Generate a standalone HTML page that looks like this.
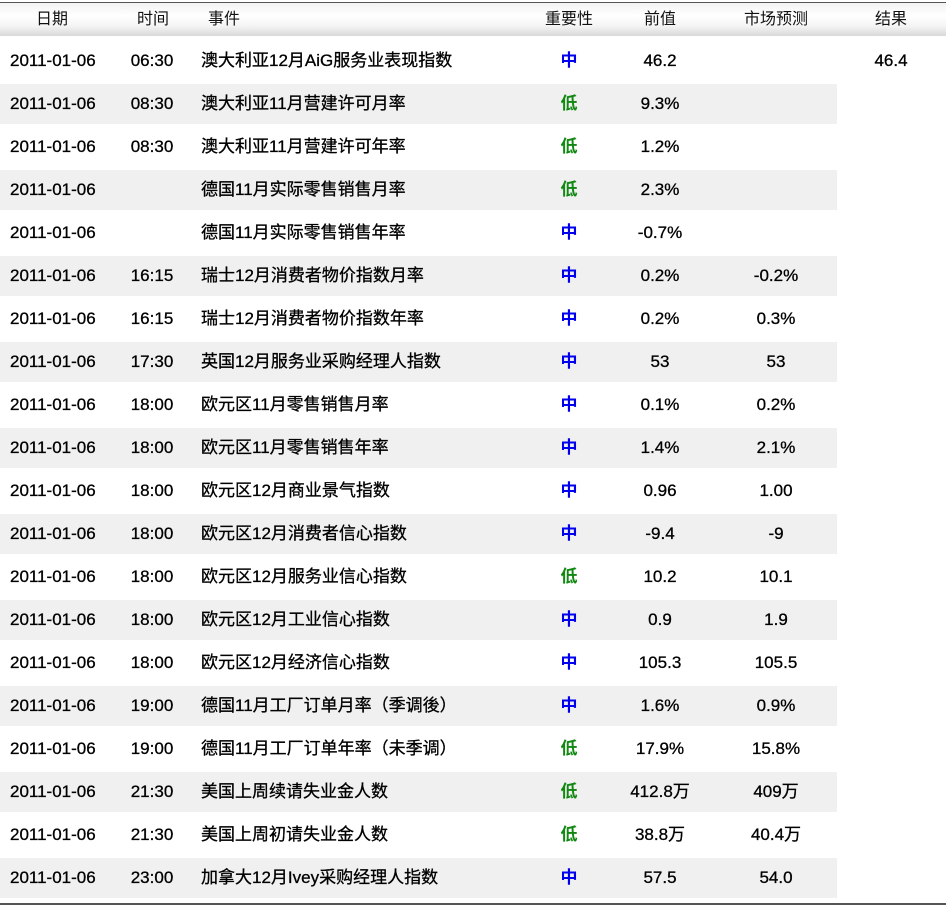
<!DOCTYPE html>
<html><head><meta charset="utf-8"><style>
body{margin:0;width:946px;height:912px;background:#fff;position:relative;overflow:hidden;font-family:"Liberation Sans","Noto Sans CJK SC",sans-serif;font-size:17px;color:#000}
.hd{position:absolute;left:0;top:2px;width:946px;height:33px;border-top:1px solid #555;background:linear-gradient(#f2f2f2,#fff 40%,#f4f4f4 70%,#d8d8d8);}
.hd span{position:absolute;top:0;line-height:33px;font-size:16px;color:#111}
.r{position:absolute;left:0;width:946px;height:43px}
.r.g::before{content:"";position:absolute;left:0;top:3px;width:837px;height:40px;background:#f0f0f0}
.r span{position:absolute;top:1px;line-height:43px;white-space:nowrap;-webkit-text-stroke:0.3px #000}
.c{transform:translateX(-50%)}
.m{color:#0000ee;font-weight:bold;-webkit-text-stroke:0!important}
.l{color:#118811;font-weight:bold;-webkit-text-stroke:0!important}
.bot{position:absolute;left:0;top:903px;width:946px;height:2px;background:#555}
</style></head><body>
<div class="hd">
<span class="c" style="left:52px">日期</span>
<span class="c" style="left:153px">时间</span>
<span style="left:208px">事件</span>
<span class="c" style="left:569px">重要性</span>
<span class="c" style="left:660px">前值</span>
<span class="c" style="left:776px">市场预测</span>
<span class="c" style="left:891px">结果</span>
</div>

<div class="r" style="top:38px"><span style="left:10px">2011-01-06</span><span class="c" style="left:152px">06:30</span><span style="left:201px">澳大利亚12月AiG服务业表现指数</span><span class="c m" style="left:569px">中</span><span class="c" style="left:660px">46.2</span><span class="c" style="left:891px">46.4</span></div>
<div class="r g" style="top:81px"><span style="left:10px">2011-01-06</span><span class="c" style="left:152px">08:30</span><span style="left:201px">澳大利亚11月营建许可月率</span><span class="c l" style="left:569px">低</span><span class="c" style="left:660px">9.3%</span></div>
<div class="r" style="top:124px"><span style="left:10px">2011-01-06</span><span class="c" style="left:152px">08:30</span><span style="left:201px">澳大利亚11月营建许可年率</span><span class="c l" style="left:569px">低</span><span class="c" style="left:660px">1.2%</span></div>
<div class="r g" style="top:167px"><span style="left:10px">2011-01-06</span><span style="left:201px">德国11月实际零售销售月率</span><span class="c l" style="left:569px">低</span><span class="c" style="left:660px">2.3%</span></div>
<div class="r" style="top:210px"><span style="left:10px">2011-01-06</span><span style="left:201px">德国11月实际零售销售年率</span><span class="c m" style="left:569px">中</span><span class="c" style="left:660px">-0.7%</span></div>
<div class="r g" style="top:253px"><span style="left:10px">2011-01-06</span><span class="c" style="left:152px">16:15</span><span style="left:201px">瑞士12月消费者物价指数月率</span><span class="c m" style="left:569px">中</span><span class="c" style="left:660px">0.2%</span><span class="c" style="left:776px">-0.2%</span></div>
<div class="r" style="top:296px"><span style="left:10px">2011-01-06</span><span class="c" style="left:152px">16:15</span><span style="left:201px">瑞士12月消费者物价指数年率</span><span class="c m" style="left:569px">中</span><span class="c" style="left:660px">0.2%</span><span class="c" style="left:776px">0.3%</span></div>
<div class="r g" style="top:339px"><span style="left:10px">2011-01-06</span><span class="c" style="left:152px">17:30</span><span style="left:201px">英国12月服务业采购经理人指数</span><span class="c m" style="left:569px">中</span><span class="c" style="left:660px">53</span><span class="c" style="left:776px">53</span></div>
<div class="r" style="top:382px"><span style="left:10px">2011-01-06</span><span class="c" style="left:152px">18:00</span><span style="left:201px">欧元区11月零售销售月率</span><span class="c m" style="left:569px">中</span><span class="c" style="left:660px">0.1%</span><span class="c" style="left:776px">0.2%</span></div>
<div class="r g" style="top:425px"><span style="left:10px">2011-01-06</span><span class="c" style="left:152px">18:00</span><span style="left:201px">欧元区11月零售销售年率</span><span class="c m" style="left:569px">中</span><span class="c" style="left:660px">1.4%</span><span class="c" style="left:776px">2.1%</span></div>
<div class="r" style="top:468px"><span style="left:10px">2011-01-06</span><span class="c" style="left:152px">18:00</span><span style="left:201px">欧元区12月商业景气指数</span><span class="c m" style="left:569px">中</span><span class="c" style="left:660px">0.96</span><span class="c" style="left:776px">1.00</span></div>
<div class="r g" style="top:511px"><span style="left:10px">2011-01-06</span><span class="c" style="left:152px">18:00</span><span style="left:201px">欧元区12月消费者信心指数</span><span class="c m" style="left:569px">中</span><span class="c" style="left:660px">-9.4</span><span class="c" style="left:776px">-9</span></div>
<div class="r" style="top:554px"><span style="left:10px">2011-01-06</span><span class="c" style="left:152px">18:00</span><span style="left:201px">欧元区12月服务业信心指数</span><span class="c l" style="left:569px">低</span><span class="c" style="left:660px">10.2</span><span class="c" style="left:776px">10.1</span></div>
<div class="r g" style="top:597px"><span style="left:10px">2011-01-06</span><span class="c" style="left:152px">18:00</span><span style="left:201px">欧元区12月工业信心指数</span><span class="c m" style="left:569px">中</span><span class="c" style="left:660px">0.9</span><span class="c" style="left:776px">1.9</span></div>
<div class="r" style="top:640px"><span style="left:10px">2011-01-06</span><span class="c" style="left:152px">18:00</span><span style="left:201px">欧元区12月经济信心指数</span><span class="c m" style="left:569px">中</span><span class="c" style="left:660px">105.3</span><span class="c" style="left:776px">105.5</span></div>
<div class="r g" style="top:683px"><span style="left:10px">2011-01-06</span><span class="c" style="left:152px">19:00</span><span style="left:201px">德国11月工厂订单月率（季调後）</span><span class="c m" style="left:569px">中</span><span class="c" style="left:660px">1.6%</span><span class="c" style="left:776px">0.9%</span></div>
<div class="r" style="top:726px"><span style="left:10px">2011-01-06</span><span class="c" style="left:152px">19:00</span><span style="left:201px">德国11月工厂订单年率（未季调）</span><span class="c l" style="left:569px">低</span><span class="c" style="left:660px">17.9%</span><span class="c" style="left:776px">15.8%</span></div>
<div class="r g" style="top:769px"><span style="left:10px">2011-01-06</span><span class="c" style="left:152px">21:30</span><span style="left:201px">美国上周续请失业金人数</span><span class="c l" style="left:569px">低</span><span class="c" style="left:660px">412.8万</span><span class="c" style="left:776px">409万</span></div>
<div class="r" style="top:812px"><span style="left:10px">2011-01-06</span><span class="c" style="left:152px">21:30</span><span style="left:201px">美国上周初请失业金人数</span><span class="c l" style="left:569px">低</span><span class="c" style="left:660px">38.8万</span><span class="c" style="left:776px">40.4万</span></div>
<div class="r g" style="top:855px"><span style="left:10px">2011-01-06</span><span class="c" style="left:152px">23:00</span><span style="left:201px">加拿大12月Ivey采购经理人指数</span><span class="c m" style="left:569px">中</span><span class="c" style="left:660px">57.5</span><span class="c" style="left:776px">54.0</span></div>
<div class="bot"></div>
</body></html>
